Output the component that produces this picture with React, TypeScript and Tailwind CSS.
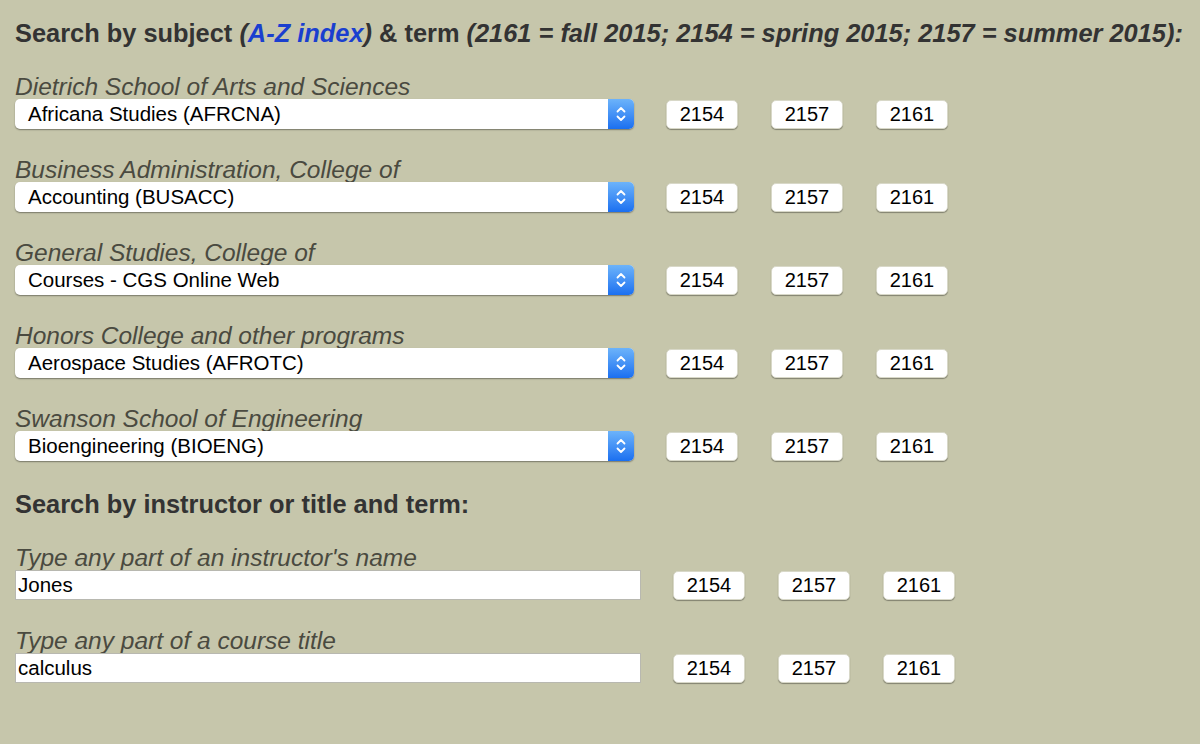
import React from "react";

const subjects = [
  { school: "Dietrich School of Arts and Sciences", value: "Africana Studies (AFRCNA)" },
  { school: "Business Administration, College of", value: "Accounting (BUSACC)" },
  { school: "General Studies, College of", value: "Courses - CGS Online Web" },
  { school: "Honors College and other programs", value: "Aerospace Studies (AFROTC)" },
  { school: "Swanson School of Engineering", value: "Bioengineering (BIOENG)" },
];

const terms = ["2154", "2157", "2161"];

function TermButtons() {
  return (
    <div className="flex gap-[33px]">
      {terms.map((t) => (
        <div
          key={t}
          className="w-[72px] h-[29px] rounded-[5px] bg-white flex items-center justify-center text-[20px] text-black shadow-[0_1px_1px_rgba(0,0,0,0.35)] border border-[#d8d8c8]"
        >
          {t}
        </div>
      ))}
    </div>
  );
}

function Stepper() {
  return (
    <div className="w-[26px] h-full rounded-r-[5px] bg-gradient-to-b from-[#6cb3fa] to-[#1a6ff0] flex items-center justify-center">
      <svg width="12" height="20" viewBox="0 0 12 20" fill="none" stroke="white" strokeWidth="1.8" strokeLinecap="round" strokeLinejoin="round">
        <path d="M2.5 7.5 L6 4 L9.5 7.5" />
        <path d="M2.5 12.5 L6 16 L9.5 12.5" />
      </svg>
    </div>
  );
}

export default function App() {
  return (
    <div
      className="w-[1200px] h-[744px] bg-[#c6c6ab] pl-[15px] pt-[19px] text-[#333]"
      style={{ fontFamily: '"Liberation Sans", Arial, sans-serif' }}
    >
      <h1 className="text-[25.4px] leading-[28px] font-bold text-[#333] whitespace-nowrap">
        Search by subject <i>(</i>
        <i className="text-[#1a3fcf]">A-Z index</i>
        <i>)</i> &amp; term <i>(2161 = fall 2015; 2154 = spring 2015; 2157 = summer 2015):</i>
      </h1>

      <div className="mt-[28px] flex flex-col gap-[29px]">
        {subjects.map((s) => (
          <div key={s.school} className="flex flex-col">
            <div className="italic text-[24.5px] leading-[24px] text-[#4a4a40] whitespace-nowrap">{s.school}</div>
            <div className="flex items-center">
              <div className="w-[619px] h-[30px] rounded-[5px] bg-white flex items-center shadow-[0_1px_1.5px_rgba(0,0,0,0.4)]">
                <div className="flex-1 pl-[13px] text-[20.5px] text-black">{s.value}</div>
                <Stepper />
              </div>
              <div className="ml-[32px]">
                <TermButtons />
              </div>
            </div>
          </div>
        ))}
      </div>

      <h2 className="mt-[29px] text-[25.4px] leading-[28px] font-bold text-[#333]">
        Search by instructor or title and term:
      </h2>

      <div className="mt-[28px] flex flex-col gap-[29px]">
        {[
          { label: "Type any part of an instructor's name", value: "Jones" },
          { label: "Type any part of a course title", value: "calculus" },
        ].map((f) => (
          <div key={f.label} className="flex flex-col">
            <div className="italic text-[24.5px] leading-[24px] text-[#4a4a40] whitespace-nowrap">{f.label}</div>
            <div className="flex items-center">
              <div className="w-[626px] h-[30px] bg-white border border-[#b8b8b0] flex items-center pl-[2px] text-[20.5px] text-black">
                {f.value}
              </div>
              <div className="ml-[32px]">
                <TermButtons />
              </div>
            </div>
          </div>
        ))}
      </div>
    </div>
  );
}
